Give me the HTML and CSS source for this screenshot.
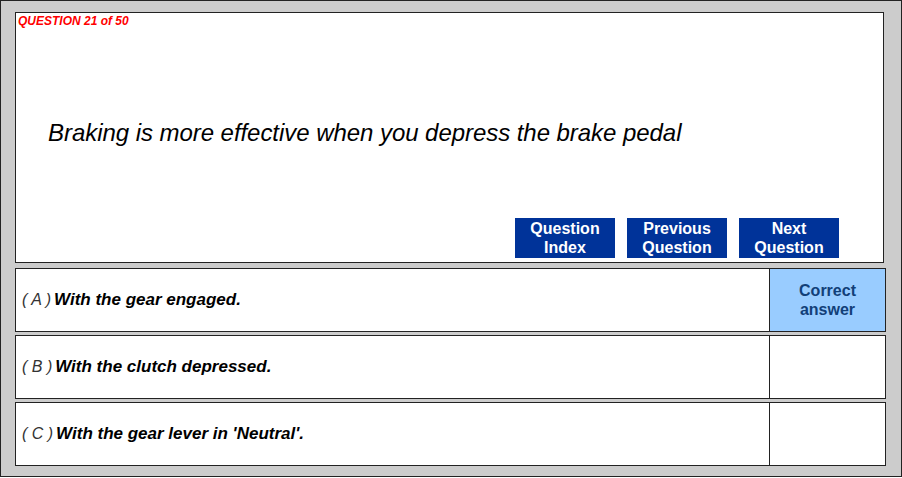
FILE: index.html
```html
<!DOCTYPE html>
<html lang="en">
<head>
  <meta charset="UTF-8" />
  <title>Question 21 of 50</title>
  <link rel="stylesheet" href="styles.css">
</head>
<body>
  <div class="frame">
    <div class="question-box">
      <div class="question-num">QUESTION 21 of 50</div>
      <div class="question-text">Braking is more effective when you depress the brake pedal</div>
      <div class="nav">
        <button class="nav-btn">Question<br>Index</button>
        <button class="nav-btn">Previous<br>Question</button>
        <button class="nav-btn">Next<br>Question</button>
      </div>
    </div>

    <!-- answers -->
    <div class="answer">
      <div class="answer-text"><span class="letter">( A )</span> With the gear engaged.</div>
      <div class="answer-mark correct">Correct<br>answer</div>
    </div>
    <div class="answer">
      <div class="answer-text"><span class="letter">( B )</span> With the clutch depressed.</div>
      <div class="answer-mark"></div>
    </div>
    <div class="answer">
      <div class="answer-text"><span class="letter">( C )</span> With the gear lever in 'Neutral'.</div>
      <div class="answer-mark"></div>
    </div>
  </div>
</body>
</html>
```

FILE: styles.css
```css
/* page */
body {
  margin: 0;
  background: #fff;
  font-family: "Liberation Sans", Arial, sans-serif;
}
.frame {
  box-sizing: border-box;
  width: 902px;
  height: 477px;
  background: #cccccc;
  border: 1px solid #222;
  padding: 11px 14px 0 14px;
  display: flex;
  flex-direction: column;
}

/* question area */
.question-box {
  box-sizing: border-box;
  width: 869px;
  height: 251px;
  background: #fff;
  border: 1px solid #222;
  display: flex;
  flex-direction: column;
  margin-bottom: 5px;
}
.question-num {
  color: #ff0000;
  font-size: 12px;
  font-weight: bold;
  font-style: italic;
  padding: 1px 0 0 2px;
  line-height: 14px;
}
.question-text {
  font-size: 24px;
  font-style: italic;
  color: #000;
  padding: 91px 0 0 32px;
  line-height: 28px;
  letter-spacing: -0.05px;
}
.nav {
  display: flex;
  gap: 12px;
  margin: auto 44px 4px auto;
}
.nav-btn {
  width: 100px;
  height: 40px;
  border: none;
  padding: 0;
  background: #003399;
  color: #fff;
  font-family: "Liberation Sans", Arial, sans-serif;
  font-size: 16px;
  font-weight: bold;
  line-height: 19px;
  cursor: pointer;
}

/* answers */
.answer {
  box-sizing: border-box;
  width: 871px;
  height: 64px;
  background: #fff;
  border: 1px solid #222;
  display: flex;
  margin-bottom: 3px;
}
.answer-text {
  flex: 1;
  display: flex;
  align-items: center;
  gap: 3px;
  padding-left: 6px;
  font-size: 17px;
  font-weight: bold;
  font-style: italic;
  color: #000;
}
.letter {
  font-size: 16px;
  font-weight: normal;
  color: #333;
}
.answer-mark {
  width: 115px;
  border-left: 1px solid #222;
  display: flex;
  align-items: center;
  justify-content: center;
  text-align: center;
  font-size: 16px;
  font-weight: bold;
  line-height: 19px;
  color: #123f78;
}
.answer-mark.correct {
  background: #99ccff;
}
```
